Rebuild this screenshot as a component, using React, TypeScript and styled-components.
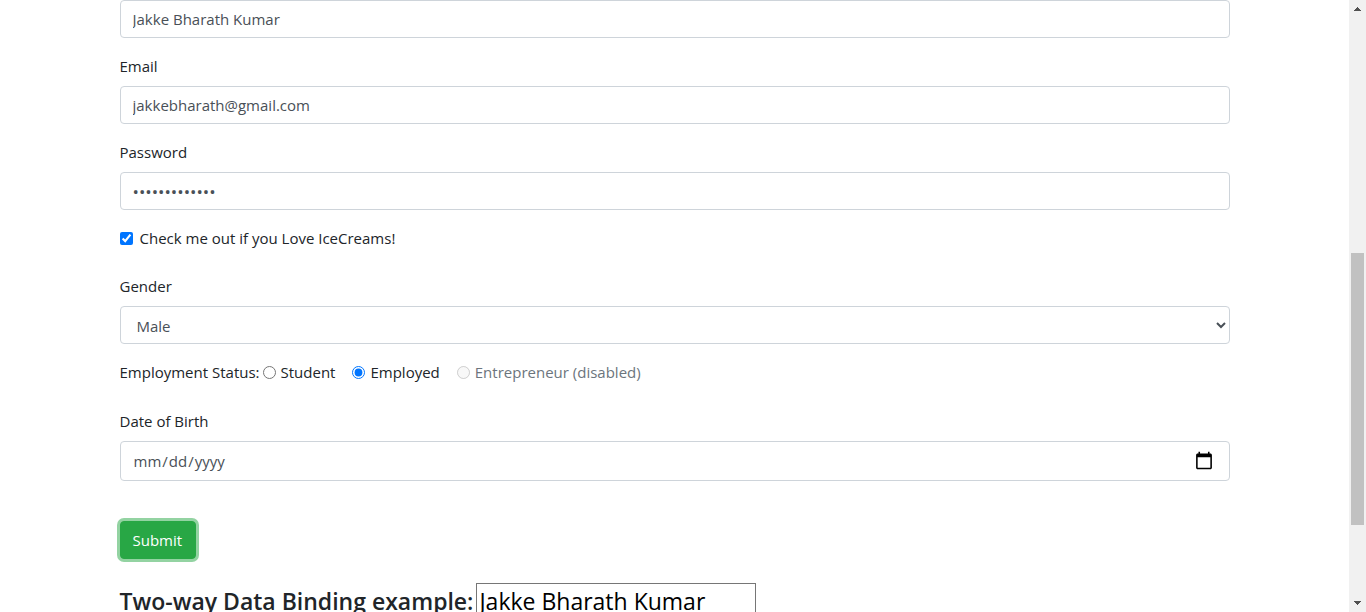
import React, { useState } from "react";
import styled, { createGlobalStyle } from "styled-components";

const GlobalStyle = createGlobalStyle`
  *, *::before, *::after { box-sizing: border-box; }
  body {
    margin: 0;
    background: #fff;
    color: #212529;
    font-family: "Segoe UI", "Open Sans", "Noto Sans", sans-serif;
    font-size: 15px;
    line-height: 24px;
  }
  input, select, button { font-family: inherit; margin: 0; }
`;

const Page = styled.div`
  display: flex;
  height: 100vh;
  overflow: hidden;
`;

const Content = styled.main`
  flex: 1;
  min-width: 0;
  overflow: hidden;
  padding: 0 16px;
`;

const Container = styled.div`
  max-width: 1110px;
  margin: 0 auto;
`;

const Group = styled.div`
  margin-bottom: 16px;
`;

const Label = styled.label`
  display: block;
  margin-bottom: 8px;
`;

const Input = styled.input`
  display: block;
  width: 100%;
  height: 38px;
  padding: 6px 12px;
  border: 1px solid #ced4da;
  border-radius: 4px;
  background: #fff;
  color: #495057;
  font-size: 15px;
  line-height: 24px;
`;

const PasswordInput = styled(Input)`
  font-size: 17px;
`;

const DateInput = styled(Input)`
  height: 40px;

  &::-webkit-calendar-picker-indicator {
    box-sizing: content-box;
    width: 20px;
    height: 20px;
    padding: 3px;
  }
`;

const Select = styled.select`
  display: block;
  width: 100%;
  height: 38px;
  padding: 7px 12px 5px;
  border: 1px solid #ced4da;
  border-radius: 4px;
  background: #fff;
  color: #495057;
  font-size: 15px;
`;

const Tick = styled.input`
  width: 13px;
  height: 13px;
  accent-color: #0075ff;
`;

const CheckRow = styled.div`
  display: flex;
  align-items: center;
  gap: 7px;
  margin-bottom: 24px;
`;

const RadioRow = styled.div`
  display: flex;
  align-items: center;
  margin-bottom: 25px;
`;

const RowTitle = styled.span`
  margin-right: 3px;
`;

const Option = styled.div<{ $disabled?: boolean }>`
  display: flex;
  align-items: center;
  gap: 5px;
  margin-right: 17px;
  color: ${(p) => (p.$disabled ? "#6c757d" : "inherit")};
`;

const SubmitButton = styled.button`
  display: block;
  height: 38px;
  margin: 40px 0 24px;
  padding: 6px 13px 6px 12px;
  border: 1px solid #28a745;
  border-radius: 4px;
  background: #28a745;
  box-shadow: 0 0 0 3px rgba(40, 167, 69, 0.5);
  color: #fff;
  font-size: 15px;
  line-height: 24px;
`;

const Heading = styled.h4`
  display: flex;
  align-items: center;
  gap: 3px;
  margin: 0;
  font-size: 23px;
  font-weight: 600;
  line-height: 28px;
`;

const BindingInput = styled.input`
  width: 280px;
  height: 36px;
  padding: 1px 2px;
  border: 1px solid #767676;
  background: #fff;
  color: #000;
  font-size: 23px;
`;

const ScrollBar = styled.div`
  display: flex;
  flex-direction: column;
  flex: none;
  width: 17px;
  background: #f1f1f1;
`;

const Arrow = styled.svg`
  display: block;
  flex: none;
  width: 17px;
  height: 17px;
  fill: #505050;
`;

const Gap = styled.div<{ $grow: number }>`
  flex: ${(p) => p.$grow} 1 0;
`;

const Thumb = styled.div`
  flex: 272 1 0;
  margin: 0 2px;
  background: #c1c1c1;
`;

export default function App() {
  const [name, setName] = useState("Jakke Bharath Kumar");
  const [status, setStatus] = useState("employed");

  return (
    <>
      <GlobalStyle />
      <Page>
        <Content>
          <Container>
            <form onSubmit={(e) => e.preventDefault()}>
              <Group>
                <Input aria-label="Name" value={name} onChange={(e) => setName(e.target.value)} />
              </Group>
              <Group>
                <Label htmlFor="email">Email</Label>
                <Input id="email" type="email" defaultValue="jakkebharath@gmail.com" />
              </Group>
              <Group>
                <Label htmlFor="password">Password</Label>
                <PasswordInput id="password" type="password" defaultValue="icecreams1234" />
              </Group>
              <CheckRow>
                <Tick id="love" type="checkbox" defaultChecked />
                <label htmlFor="love">Check me out if you Love IceCreams!</label>
              </CheckRow>
              <Group>
                <Label htmlFor="gender">Gender</Label>
                <Select id="gender" defaultValue="Male">
                  <option>Male</option>
                  <option>Female</option>
                </Select>
              </Group>
              <RadioRow role="radiogroup" aria-labelledby="status-title">
                <RowTitle id="status-title">Employment Status:</RowTitle>
                <Option>
                  <Tick
                    id="student"
                    type="radio"
                    name="status"
                    checked={status === "student"}
                    onChange={() => setStatus("student")}
                  />
                  <label htmlFor="student">Student</label>
                </Option>
                <Option>
                  <Tick
                    id="employed"
                    type="radio"
                    name="status"
                    checked={status === "employed"}
                    onChange={() => setStatus("employed")}
                  />
                  <label htmlFor="employed">Employed</label>
                </Option>
                <Option $disabled>
                  <Tick id="entrepreneur" type="radio" name="status" disabled />
                  <label htmlFor="entrepreneur">Entrepreneur (disabled)</label>
                </Option>
              </RadioRow>
              <Label htmlFor="dob">Date of Birth</Label>
              <DateInput id="dob" type="date" />
              <SubmitButton type="submit">Submit</SubmitButton>
            </form>
            <Heading>
              <label htmlFor="binding">Two-way Data Binding example:</label>
              <BindingInput id="binding" value={name} onChange={(e) => setName(e.target.value)} />
            </Heading>
          </Container>
        </Content>
        <ScrollBar aria-hidden="true">
          <Arrow viewBox="0 0 17 17" shapeRendering="crispEdges">
            <path d="M8 7h1v1h1v1h1v1h1v1H5v-1h1V9h1V8h1z" />
          </Arrow>
          <Gap $grow={236} />
          <Thumb />
          <Gap $grow={70} />
          <Arrow viewBox="0 0 17 17" shapeRendering="crispEdges">
            <path d="M5 6h7v1h-1v1h-1v1H9v1H8V9H7V8H6V7H5z" />
          </Arrow>
        </ScrollBar>
      </Page>
    </>
  );
}
